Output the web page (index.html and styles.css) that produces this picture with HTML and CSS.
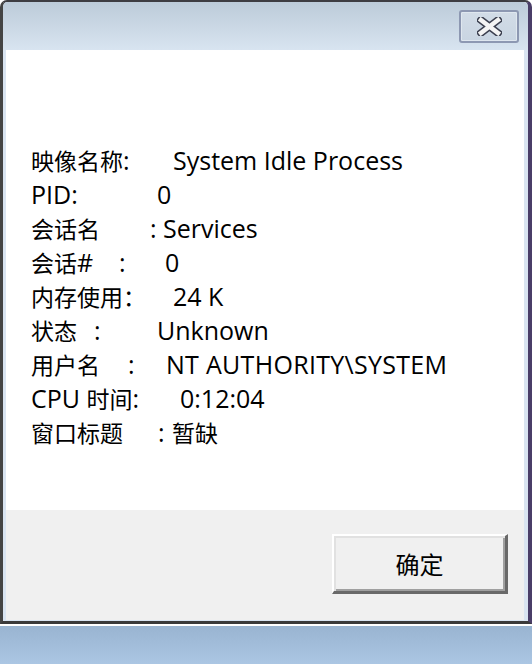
FILE: index.html
```html
<!DOCTYPE html>
<html lang="zh-CN">
<head>
<meta charset="utf-8">
<title>进程属性</title>
<link rel="stylesheet" href="styles.css">
</head>
<body>
<div class="window">
  <div class="titlebar">
    <div class="close">
      <svg width="25" height="19" viewBox="0 0 25 19">
        <path d="M4 3 L21 16 M21 3 L4 16" stroke="#3b3f4f" stroke-width="7.5" stroke-linecap="square"/>
        <path d="M4 3 L21 16 M21 3 L4 16" stroke="#f4f4f4" stroke-width="4.5" stroke-linecap="square"/>
      </svg>
    </div>
  </div>
  <div class="client">
    <div class="content">
      <div class="row r1"><span><span class="zh">映像名称</span>:</span><span>System Idle Process</span></div>
      <div class="row r2"><span>PID:</span><span>0</span></div>
      <div class="row r3"><span class="zh">会话名</span><span>: Services</span></div>
      <div class="row r4"><span><span class="zh">会话</span>#</span><span>:</span><span>0</span></div>
      <div class="row r5"><span class="zh">内存使用：</span><span>24 K</span></div>
      <div class="row r6"><span class="zh">状态</span><span>:</span><span>Unknown</span></div>
      <div class="row r7"><span class="zh">用户名</span><span>:</span><span class="wide">NT AUTHORITY\SYSTEM</span></div>
      <div class="row r8"><span>CPU <span class="zh">时间</span>:</span><span>0:12:04</span></div>
      <div class="row r9"><span class="zh">窗口标题</span><span>:</span><span class="zh">暂缺</span></div>
    </div>
    <div class="footer">
      <button class="btn">确定</button>
    </div>
  </div>
</div>
<div class="gap"></div>
<div class="desktop"></div>
</body>
</html>
```
FILE: styles.css
```css
* { box-sizing: border-box; }
html, body { margin: 0; padding: 0; }
body {
  width: 532px;
  height: 664px;
  display: flex;
  flex-direction: column;
  font-family: "Open Sans", "Noto Sans CJK SC", sans-serif;
  overflow: hidden;
}
.window {
  height: 624px;
  border-style: solid;
  border-width: 2px 4px 3px 3px;
  border-color: #3d3d42 #4a3e68 #3a3a3a #444444;
  border-radius: 7px 7px 0 0;
  background: #d9e4f1;
  display: flex;
  flex-direction: column;
  padding-bottom: 1px;
}
.titlebar {
  height: 48px;
  flex: none;
  border-radius: 5px 5px 0 0;
  background: linear-gradient(#bccbd9, #d8e4f0);
  display: flex;
  justify-content: flex-end;
  align-items: flex-start;
  padding: 8px 9px 0 0;
}
.close {
  width: 60px;
  height: 33px;
  border: 2px solid #8d98b2;
  border-radius: 3px;
  background: linear-gradient(#d2dce7, #c9d5e2);
  box-shadow: inset 0 0 0 1px #dfe7ef;
  display: flex;
  align-items: center;
  justify-content: center;
}
.close svg { display: block; }
.client {
  flex: 1;
  margin: 0 4px 0 3px;
  background: #fff;
  display: flex;
  flex-direction: column;
}
.content {
  flex: 1;
  padding: 93px 0 0 25px;
  font-size: 25px;
  line-height: 34px;
  color: #000;
}
.zh {
  font-family: "Noto Sans CJK SC", sans-serif;
  font-size: 23px;
}
.wide { letter-spacing: 0.3px; }
.row {
  display: grid;
  white-space: pre;
  height: 34px;
  align-items: baseline;
}
.r1 { grid-template-columns: 142px auto; }
.r2 { grid-template-columns: 126px auto; }
.r3 { grid-template-columns: 119px auto; }
.r4 { grid-template-columns: 88px 46px auto; }
.r5 { grid-template-columns: 142px auto; }
.r6 { grid-template-columns: 63px 63px auto; }
.r7 { grid-template-columns: 97px 38px auto; }
.r8 { grid-template-columns: 149px auto; }
.r9 { grid-template-columns: 127px 14px auto; }
.footer {
  height: 110px;
  flex: none;
  background: #f0f0f0;
  display: flex;
  justify-content: flex-end;
  align-items: flex-start;
  padding: 24px 16px 0 0;
}
.btn {
  width: 176px;
  height: 60px;
  background: #f0f0f0;
  border-style: solid;
  border-width: 2px 3px 3px 2px;
  border-color: #ffffff #696969 #696969 #ffffff;
  box-shadow: inset 2px 2px 0 #e1e1e1, inset -2px -2px 0 #a0a0a0;
  font-family: "Noto Sans CJK SC", sans-serif;
  font-size: 24px;
  color: #000;
  padding: 0;
}
.gap {
  height: 2px;
  flex: none;
  background: #ffffff;
}
.desktop {
  flex: 1;
  background: linear-gradient(#99b4d1, #abc6e3);
}
```
